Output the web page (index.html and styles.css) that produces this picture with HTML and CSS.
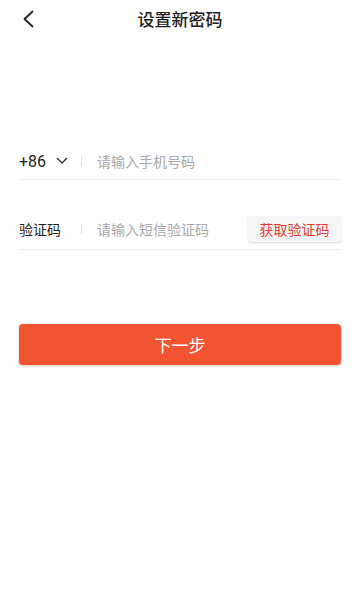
FILE: index.html
```html
<!DOCTYPE html>
<html lang="zh">
<head>
<meta charset="utf-8">
<link rel="stylesheet" href="styles.css">
</head>
<body>
<div class="page">
  <header class="nav">
    <span class="back">
      <svg width="12" height="18" viewBox="0 0 12 18"><path d="M10.5 1.5 L2.5 9 L10.5 16.5" fill="none" stroke="#222" stroke-width="1.8" stroke-linecap="round" stroke-linejoin="round"/></svg>
    </span>
    <h1 class="title">设置新密码</h1>
  </header>
  <div class="form">
    <div class="row">
      <div class="label code">+86
        <svg class="chev" width="12" height="8" viewBox="0 0 12 8"><path d="M1.5 1.5 L6 6 L10.5 1.5" fill="none" stroke="#333" stroke-width="1.4" stroke-linecap="round" stroke-linejoin="round"/></svg>
      </div>
      <span class="sep"></span>
      <span class="ph">请输入手机号码</span>
    </div>
    <div class="row row2">
      <div class="label">验证码</div>
      <span class="sep"></span>
      <span class="ph">请输入短信验证码</span>
      <span class="getcode">获取验证码</span>
    </div>
  </div>
  <button class="next">下一步</button>
</div>
</body>
</html>
```
FILE: styles.css
```css
* { box-sizing: border-box; }
html, body { margin: 0; padding: 0; background: #fff; }
body { font-family: "Noto Sans CJK SC", "Noto Sans", sans-serif; color: #222; }
.page { width: 360px; height: 600px; padding: 0 19px; }
.nav { position: relative; height: 38px; display: flex; align-items: center; justify-content: center; }
.back { position: absolute; left: 3px; top: 10px; display: flex; }
.title { margin: 0; font-size: 17px; font-weight: 500; color: #222; line-height: 38px; }
.form { padding-top: 105px; }
.row { display: flex; align-items: center; height: 37px; border-bottom: 1px solid #f0f0f0; }
.row2 { margin-top: 33px; height: 37px; padding-bottom: 5px; }
.label { width: 62px; font-size: 14px; color: #222; display: flex; align-items: center; }
.code { font-family: "Roboto", "Noto Sans", sans-serif; font-size: 16px; }
.chev { margin-left: 10px; }
.sep { width: 1px; height: 10px; background: #ddd; margin-right: 15px; }
.ph { font-size: 14px; color: #a8a8a8; flex: 1; }
.getcode { width: 93px; height: 26px; background: #f6f6f6; border-radius: 3px; box-shadow: 0 1px 2px rgba(0,0,0,0.15); color: #e5392e; font-size: 14px; display: flex; align-items: center; justify-content: center; }
.next { display: block; width: 100%; height: 41px; margin-top: 74px; border: none; border-radius: 4px; background: #f25330; color: #fff; font-family: "Noto Sans CJK SC", sans-serif; font-size: 17px; box-shadow: 0 1px 3px rgba(0,0,0,0.2); }
```
